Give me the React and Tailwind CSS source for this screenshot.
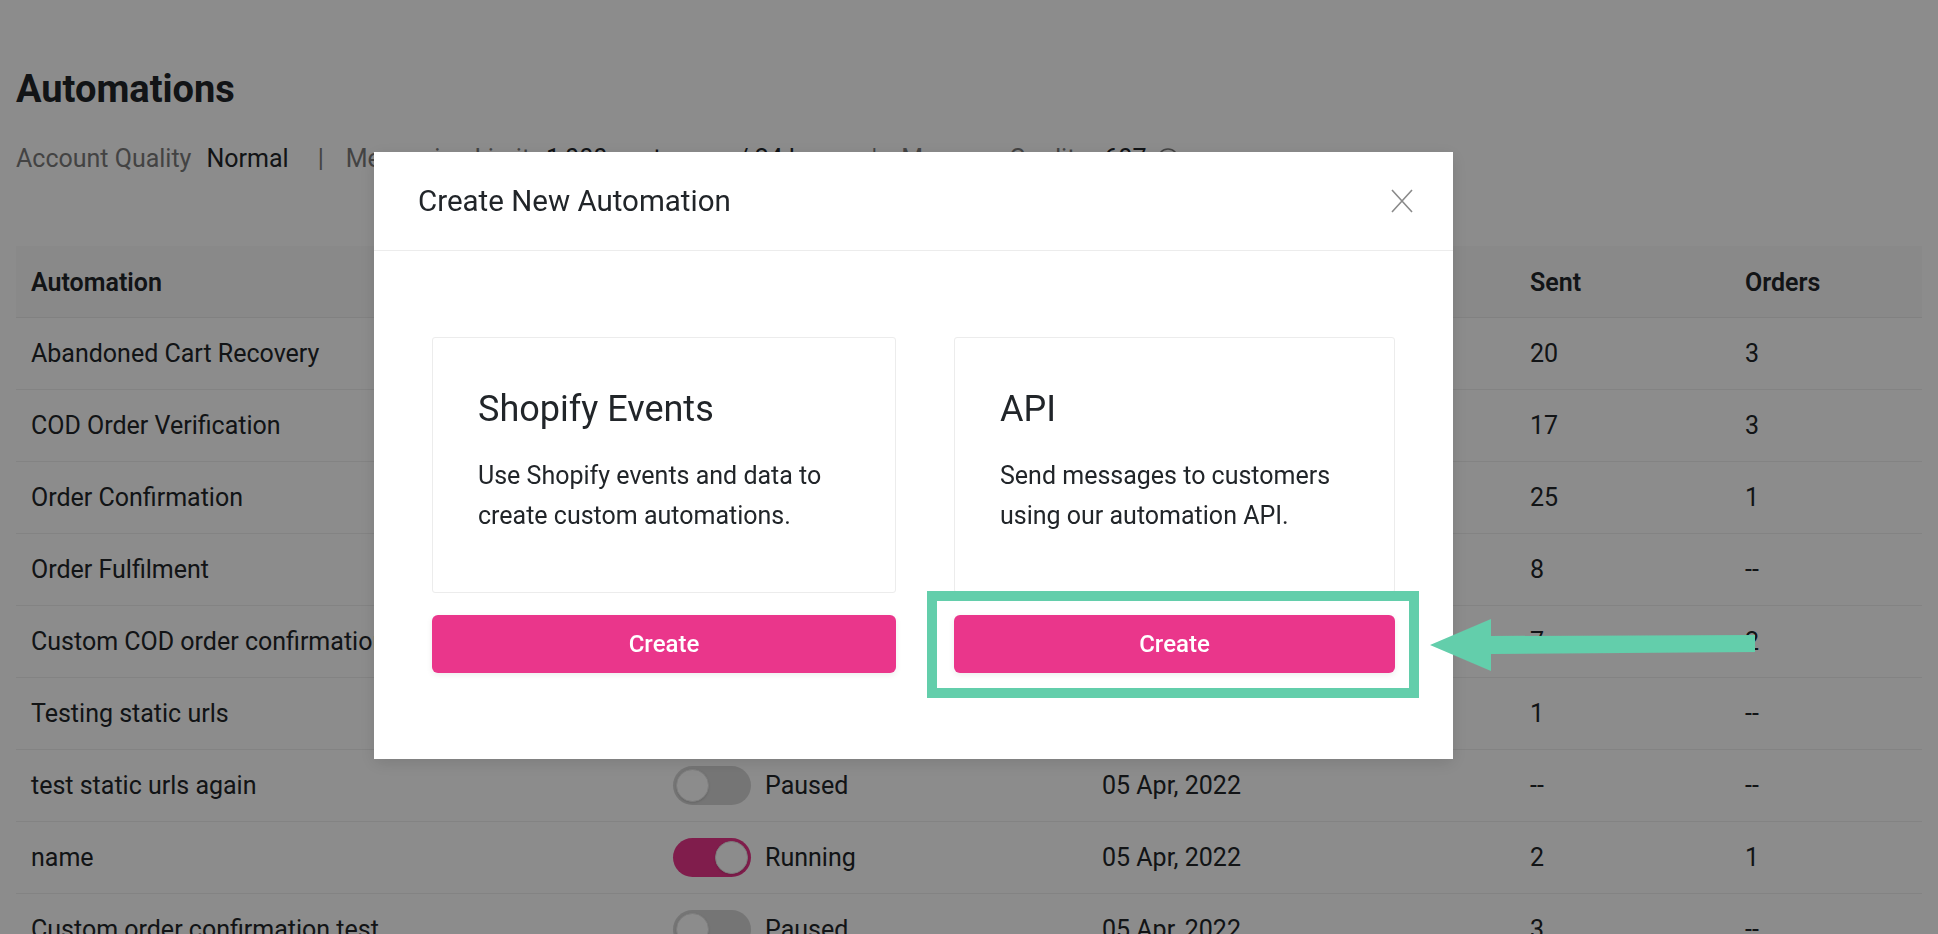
import React from "react";
import { Info } from "lucide-react";

const rows = [
  { name: "Abandoned Cart Recovery", on: true, date: "18 Jan, 2022", sent: "20", orders: "3" },
  { name: "COD Order Verification", on: true, date: "18 Jan, 2022", sent: "17", orders: "3" },
  { name: "Order Confirmation", on: true, date: "18 Jan, 2022", sent: "25", orders: "1" },
  { name: "Order Fulfilment", on: true, date: "18 Jan, 2022", sent: "8", orders: "--" },
  { name: "Custom COD order confirmation", on: true, date: "02 Mar, 2022", sent: "7", orders: "2" },
  { name: "Testing static urls", on: false, date: "05 Apr, 2022", sent: "1", orders: "--" },
  { name: "test static urls again", on: false, date: "05 Apr, 2022", sent: "--", orders: "--" },
  { name: "name", on: true, date: "05 Apr, 2022", sent: "2", orders: "1" },
  { name: "Custom order confirmation test", on: false, date: "05 Apr, 2022", sent: "3", orders: "--" },
];

const options = [
  { title: "Shopify Events", lines: ["Use Shopify events and data to", "create custom automations."] },
  { title: "API", lines: ["Send messages to customers", "using our automation API."] },
];

function Toggle({ on }) {
  return (
    <span
      className={`flex h-[39px] w-[78px] items-center rounded-full px-[3px] ${
        on ? "justify-end bg-[#ea368b]" : "justify-start bg-[#d6d6d6]"
      }`}
    >
      <span className="h-[33px] w-[33px] rounded-full border border-[#e4e4e4] bg-white shadow-sm" />
    </span>
  );
}

export default function App() {
  return (
    <div className="relative h-[934px] overflow-hidden bg-white font-['Roboto',sans-serif] text-[#212529]">
      {/* page behind the modal */}
      <div className="px-4 pt-[66px]">
        <h1 className="text-[38px] font-bold leading-[46px]">Automations</h1>
        <div className="mt-[31px] flex items-center text-[25px] leading-[32px]">
          <span className="text-[#7a7a7a]">Account Quality</span>
          <span className="ml-[15px]">Normal</span>
          <span className="ml-[29px] mr-[22px] text-[#7a7a7a]">|</span>
          <span className="text-[#7a7a7a]">Messaging Limit</span>
          <span className="ml-[16px]">1,000 customers / 24 hours</span>
          <span className="ml-[19px] mr-[24px] text-[#7a7a7a]">|</span>
          <span className="text-[#7a7a7a]">Message Credits</span>
          <span className="ml-[16px]">607</span>
          <Info className="ml-[10px] h-[24px] w-[24px] text-[#7a7a7a]" strokeWidth={1.5} />
        </div>

        <div className="mt-[71px] text-[25px]">
          <div className="grid h-[72px] grid-cols-[642px_429px_428px_215px_1fr] items-center border-b border-[#ececec] bg-[#fafafa] pt-[3px] font-semibold">
            <div className="pl-[15px]">Automation</div>
            <div className="pl-[15px]">Status</div>
            <div className="pl-[15px]">Created On</div>
            <div className="pl-[15px]">Sent</div>
            <div className="pl-[15px]">Orders</div>
          </div>
          {rows.map((row) => (
            <div
              key={row.name}
              className="grid h-[72px] grid-cols-[642px_429px_428px_215px_1fr] items-center border-b border-[#eeeeee]"
            >
              <div className="pl-[15px]">{row.name}</div>
              <div className="flex items-center gap-[14px] pl-[15px]">
                <Toggle on={row.on} />
                <span>{row.on ? "Running" : "Paused"}</span>
              </div>
              <div className="pl-[15px]">{row.date}</div>
              <div className="pl-[15px]">{row.sent}</div>
              <div className="pl-[15px]">{row.orders}</div>
            </div>
          ))}
        </div>
      </div>

      {/* modal */}
      <div className="fixed inset-0 bg-black/45">
        <div className="absolute left-[374px] top-[152px] w-[1079px] bg-white shadow-[0_4px_16px_rgba(0,0,0,0.12)]">
          <div className="flex h-[99px] items-center justify-between border-b border-[#ececec] pl-[44px] pr-[40px]">
            <h2 className="text-[29.5px] leading-[36px]">Create New Automation</h2>
            <svg width="22" height="24" viewBox="0 0 22 24" className="text-[#8a8a8a]">
              <path d="M1 1 L21 23 M21 1 L1 23" stroke="currentColor" strokeWidth="1.6" fill="none" />
            </svg>
          </div>
          <div className="grid grid-cols-[464px_441px] gap-x-[58px] px-[58px] py-[86px]">
            {options.map((opt) => (
              <div key={opt.title} className="flex flex-col">
                <div className="h-[256px] rounded-[3px] border border-[#ececec] px-[45px] pt-[50px]">
                  <h3 className="text-[36px] leading-[42px]">{opt.title}</h3>
                  <p className="mt-[26px] text-[25px] leading-[40px]">
                    {opt.lines[0]}
                    <br />
                    {opt.lines[1]}
                  </p>
                </div>
                <button className="mt-[22px] h-[58px] rounded-[6px] bg-[#ea368b] text-[24px] font-medium text-white shadow-[0_2px_6px_rgba(0,0,0,0.08)]">
                  Create
                </button>
              </div>
            ))}
          </div>
        </div>

        {/* annotation */}
        <div className="absolute left-[927px] top-[591px] h-[107px] w-[492px] border-[10px] border-[#63ceab]" />
        <svg className="absolute left-[1428px] top-[615px]" width="330" height="60" viewBox="0 0 330 60">
          <polygon points="2,30 63,4 63,21 327,20 327,37 63,39 63,56" fill="#63ceab" />
        </svg>
      </div>
    </div>
  );
}
